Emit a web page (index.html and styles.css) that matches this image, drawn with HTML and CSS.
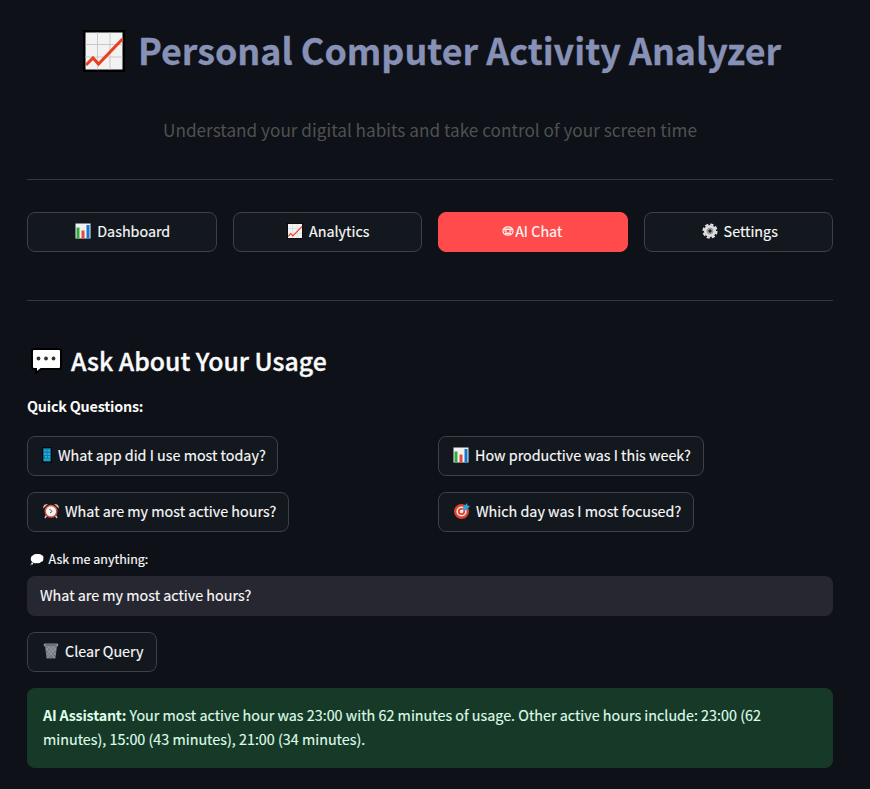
FILE: index.html
```
<!DOCTYPE html>
<html lang="en">
<head>
<meta charset="utf-8">
<title>Personal Computer Activity Analyzer</title>
<link rel="stylesheet" href="styles.css">
</head>
<body>
<svg class="defs" aria-hidden="true">
  <symbol id="chart-up" viewBox="0 0 42 42">
    <path fill="#000" d="M0 0h42v42H0z"/><path fill="#f2f2f2" d="M2.500 2.500h37v37h-37z"/>
    <path stroke="#c9c9cc" stroke-width="1" d="M14.500 2.500v37M27 2.500v37M2.500 14.500h37M2.500 27h37"/>
    <path fill="none" stroke="#e8401f" stroke-width="3" d="M3 35l7-7 5.500 6L39.500 9"/>
  </symbol>
  <symbol id="bars" viewBox="0 0 16 16">
    <path fill="#f1f1f1" d="M.5.5h15v15H.5z"/>
    <path fill="#32a842" d="M1.500 4.500h3v11h-3z"/><path fill="#e34a3a" d="M6.500 7.500h3v8h-3z"/><path fill="#1677cf" d="M11.500 2h3v13.500h-3z"/>
  </symbol>
  <symbol id="robot" viewBox="0 0 12 10">
    <ellipse cx="6" cy="5" rx="5" ry="4.200" fill="none" stroke="#fff0ee" stroke-width="1.300"/>
    <path stroke="#fff0ee" stroke-width="1.500" d="M1.500 3.200h9M2.500 5h2.200M7.300 5h2.200M3 7.200h6"/>
  </symbol>
  <symbol id="gear" viewBox="0 0 16 16">
    <circle cx="8" cy="8" r="6.600" fill="none" stroke="#dedede" stroke-width="2" stroke-dasharray="3.300 1.884"/>
    <circle cx="8" cy="8" r="4.600" fill="#aaa" stroke="#dedede" stroke-width="3"/>
    <circle cx="8" cy="8" r="3" fill="none" stroke="#999" stroke-width="1"/><circle cx="8" cy="8" r="1.700" fill="#22252b"/>
  </symbol>
  <symbol id="speech" viewBox="0 0 32 28">
    <path fill="#fff" stroke="#000" stroke-width="2" d="M3 3h25q2 0 2 2v16q0 2-2 2H10l-5 4V23H3q-2 0-2-2V5q0-2 2-2z"/>
    <g fill="#333"><circle cx="7.500" cy="12.500" r="1.900"/><circle cx="15" cy="12.500" r="1.900"/><circle cx="22.500" cy="12.500" r="1.900"/></g>
  </symbol>
  <symbol id="phone" viewBox="0 0 10 16">
    <rect width="10" height="16" rx="1" fill="#05080b"/><path fill="#0f7fa8" d="M1.200 1.200h7.600v13.300H1.200z"/>
    <path fill="#25add7" d="M2 2.500h2.500v2H2zM5.500 2.500H8v2H5.500zM2 6h2.500v2H2zM5.500 6H8v2H5.500zM3 9h2v2H3zM6 9h2v2H6zM2 12h6v1.500H2z"/>
  </symbol>
  <symbol id="clock" viewBox="0 0 16 16">
    <path stroke="#c6c6c6" stroke-width="1.500" d="M3.500 12.500L2 15M12.500 12.500L14 15"/>
    <path fill="#eab0a4" d="M.3 5.500Q-.5 1 5 1zM15.700 5.500Q16.500 1 11 1z"/>
    <circle cx="8" cy="8.300" r="5.800" fill="#f5f3f1" stroke="#d94d3f" stroke-width="1.400"/>
    <path fill="none" stroke="#555" d="M6.500 6L9 8.500 7 10"/>
  </symbol>
  <symbol id="target" viewBox="0 0 16 16">
    <circle cx="7.500" cy="8.500" r="6.300" fill="#f3e8e3" stroke="#df432f" stroke-width="2.400"/>
    <circle cx="7.500" cy="8.500" r="2.700" fill="#f3e8e3" stroke="#df432f" stroke-width="1.800"/>
    <path stroke="#eee" stroke-width="1.200" d="M7 9l4-4"/><path fill="#29a2df" d="M9 4.500L13 0l.5 2.500L16 3l-4 4.500-3-.5z"/>
  </symbol>
  <symbol id="thought" viewBox="0 0 14 13">
    <path fill="#fff" d="M3 2.300Q5 .4 7.300 1.100q3-.6 4.200 1Q14 3 13.300 5.500q.5 2.700-2.300 3.500-2 1.800-4.200 1-2 .8-3.300-.3Q.5 8.600.8 5.500.8 3 3 2.300z"/><circle cx="2.200" cy="10.400" r="1" fill="#fff"/><circle cx="1" cy="11.700" r=".5" fill="#fff"/>
  </symbol>
  <symbol id="trash" viewBox="0 0 16 16">
    <path fill="#737c82" d="M2 3h12l-1.600 12.500H3.600z"/>
    <path fill="none" stroke="#a0a7ab" stroke-width=".7" d="M3 5l9 10M6 4l7 8M10 4l3 4M13 5L4 15M10 4l-6 8M6 4L3 8"/>
    <rect x=".8" y=".5" width="14.400" height="3" rx="1" fill="#8a9297"/><path stroke="#4a5257" d="M2.500 2h11"/>
  </symbol>
</svg>
<main class="page">
  <h1 class="title"><svg class="title-icon"><use href="#chart-up"/></svg><span>Personal Computer Activity Analyzer</span></h1>
  <p class="subtitle">Understand your digital habits and take control of your screen time</p>
  <nav class="nav">
    <button class="btn"><svg class="icon"><use href="#bars"/></svg><span>Dashboard</span></button>
    <button class="btn"><svg class="icon"><use href="#chart-up"/></svg><span>Analytics</span></button>
    <button class="btn btn-active"><svg class="icon icon-robot"><use href="#robot"/></svg><span>AI Chat</span></button>
    <button class="btn btn-settings"><svg class="icon"><use href="#gear"/></svg><span>Settings</span></button>
  </nav>
  <h2 class="heading"><svg class="heading-icon"><use href="#speech"/></svg><span>Ask About Your Usage</span></h2>
  <p class="quick-label">Quick Questions:</p>
  <div class="questions">
    <button class="btn q1"><svg class="icon icon-phone"><use href="#phone"/></svg><span>What app did I use most today?</span></button>
    <button class="btn q2"><svg class="icon"><use href="#bars"/></svg><span>How productive was I this week?</span></button>
    <button class="btn q3"><svg class="icon"><use href="#clock"/></svg><span>What are my most active hours?</span></button>
    <button class="btn q4"><svg class="icon"><use href="#target"/></svg><span>Which day was I most focused?</span></button>
  </div>
  <label class="ask-label" for="query"><svg class="icon-thought"><use href="#thought"/></svg><span>Ask me anything:</span></label>
  <input class="query" id="query" value="What are my most active hours?">
  <button class="btn clear"><svg class="icon"><use href="#trash"/></svg><span>Clear Query</span></button>
  <div class="answer"><strong>AI Assistant:</strong> Your most active hour was 23:00 with 62 minutes of usage. Other active hours include: 23:00 (62<br>minutes), 15:00 (43 minutes), 21:00 (34 minutes).</div>
</main>
</body>
</html>
```
FILE: styles.css
```
* { box-sizing: border-box; }
body {
  margin: 0;
  background: #0e1117;
  color: #fafafa;
  font: 14.33px/24px "Noto Sans CJK SC", "Noto Sans", sans-serif;
  -webkit-text-stroke: 0.15px;
}
.defs { position: absolute; width: 0; height: 0; }
.page { width: 806px; margin-left: 27px; height: 789px; overflow: hidden; }
svg { flex: none; overflow: visible; -webkit-text-stroke: 0; }
span { white-space: nowrap; }
.title {
  display: flex; align-items: center; gap: 13px;
  height: 52px; margin: 23px 0 0 56px;
  color: #8790b5; font-size: 35.85px; line-height: 52px; font-weight: 700;
  -webkit-text-stroke: 0.3px;
}
.title-icon { width: 42px; height: 42px; margin-top: 4px; }
.subtitle {
  height: 30px; margin: 40px 0 0;
  color: #4f5150; text-align: center; font-size: 17.2px; line-height: 30px;
  -webkit-text-stroke: 0;
}
.nav {
  display: grid; grid-template-columns: repeat(4, 1fr); gap: 16px;
  height: 122px; margin-top: 34px; padding: 32px 0 48px;
  border: solid #363940; border-width: 1px 0;
}
.btn {
  display: flex; align-items: center; justify-content: center; gap: 6px;
  height: 40px; padding: 0 0 2px 2px;
  border: 1px solid #3d4047; border-radius: 8px;
  background: #13171e; color: #fafafa; font: inherit;
}
.icon { width: 16px; height: 16px; }
.btn-active { gap: 1px; padding-left: 0; border-color: #ff4b4b; background: #ff4b4b; }
.icon-robot { width: 12px; height: 10px; margin-left: -1px; }
.btn-settings { padding-left: 3px; }
.heading {
  display: flex; align-items: center; gap: 8px;
  height: 36px; margin: 41px 0 0 4px;
  font-size: 24.8px; line-height: 36px; font-weight: 500;
  -webkit-text-stroke: 0.35px;
}
.heading-icon { width: 32px; height: 28px; }
.quick-label { height: 24px; margin: 16px 0 18px; font-weight: 700; letter-spacing: -0.2px; -webkit-text-stroke: 0; }
.questions { display: grid; grid-template-columns: 1fr 1fr; gap: 16px; justify-items: start; }
.questions .btn, .clear { justify-content: flex-start; padding-left: 15px; }
.questions .q1 { width: 251px; padding-left: 14px; }
.questions .q2 { width: 266px; padding-left: 14px; }
.q3 { width: 262px; }
.q4 { width: 256px; }
.icon-phone { width: 10px; height: 16px; }
.ask-label { display: flex; align-items: center; gap: 5px; height: 24px; margin: 15px 0 5px 2.5px; font-size: 12.5px; }
.icon-thought { width: 14px; height: 13px; }
.query {
  display: block; width: 100%; height: 40px; padding: 0 13px 3px;
  border: 0; border-radius: 8px; background: #262730; color: #fafafa; font: inherit;
}
.clear { width: 130px; margin-top: 16px; }
.answer {
  height: 80px; margin-top: 16px; padding: 15px 16px;
  border-radius: 8px; background: #173928; color: #dffde9; white-space: nowrap;
}
.answer strong { letter-spacing: -0.22px; -webkit-text-stroke: 0; }
```
